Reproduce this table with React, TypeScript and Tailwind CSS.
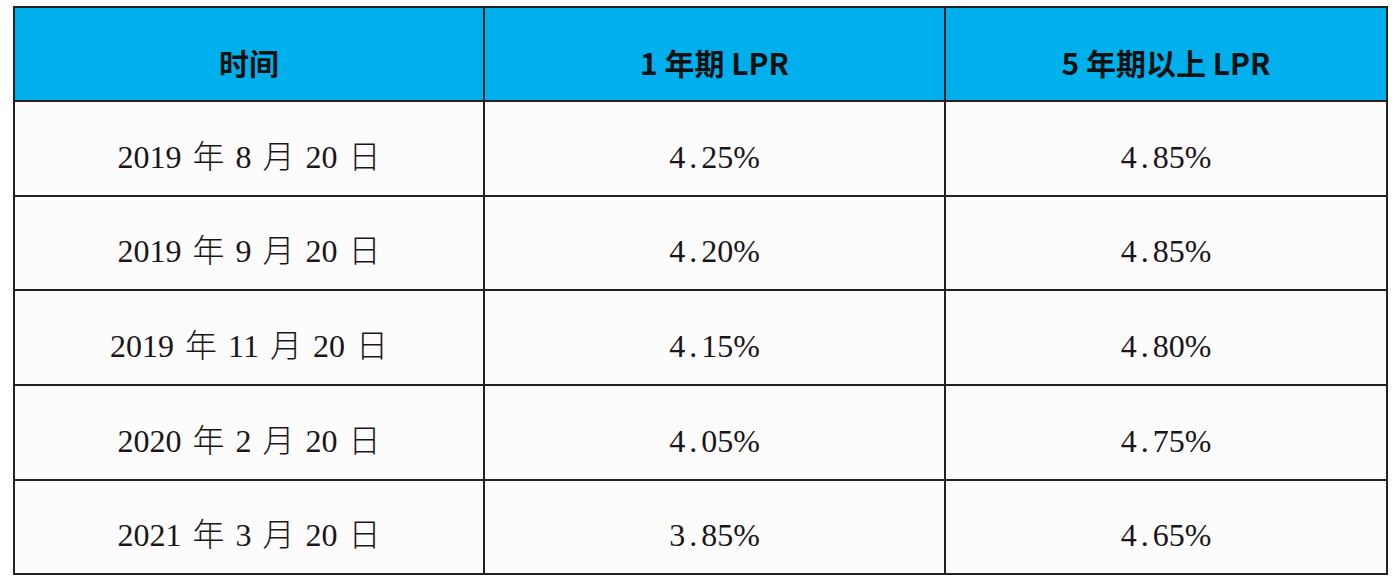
const headers = ['时间', '1 年期 LPR', '5 年期以上 LPR'];

const rows = [
    { date: ['2019', '8', '20'], one: '4.25%', five: '4.85%' },
    { date: ['2019', '9', '20'], one: '4.20%', five: '4.85%' },
    { date: ['2019', '11', '20'], one: '4.15%', five: '4.80%' },
    { date: ['2020', '2', '20'], one: '4.05%', five: '4.75%' },
    { date: ['2021', '3', '20'], one: '3.85%', five: '4.65%' },
];

const bodyFont = { fontFamily: '"Liberation Serif", "Noto Sans CJK SC", serif' };

const Rate = ({ value }: { value: string }) => {
    const [a, b] = value.split('.');
    return (
        <span className="text-[32px] text-[#1c1518]" style={bodyFont}>
            {a}
            <span className="mx-[4px]">.</span>
            {b}
        </span>
    );
};

const DateText = ({ parts }: { parts: string[] }) => (
    <span className="text-[32px] text-[#1c1518] [word-spacing:3px]" style={bodyFont}>
        {parts[0]} <span className="font-light">年</span> {parts[1]} <span className="font-light">月</span> {parts[2]} <span className="font-light">日</span>
    </span>
);

export default function App() {
    return (
        <div className="min-h-screen bg-white pl-[13px] pt-[6px]">
            <div className="grid w-[1375px] grid-cols-[468px_459px_440px] grid-rows-[92px_93px_92px_93px_93px_92px] gap-[2px] bg-[#222] p-[2px]">
                {headers.map((h) => (
                    <div
                        key={h}
                        className="flex items-center justify-center bg-[#00b0ec] pt-[16px] text-[30px] font-bold text-[#111]"
                        style={{ fontFamily: '"Noto Sans CJK SC", "Liberation Sans", sans-serif' }}
                    >
                        {h}
                    </div>
                ))}
                {rows.map((r, i) => (
                    <div key={i} className="contents">
                        <div className="flex items-center justify-center bg-[#fdfcfd] pt-[16px]">
                            <DateText parts={r.date} />
                        </div>
                        <div className="flex items-center justify-center bg-[#fdfcfd] pt-[16px]">
                            <Rate value={r.one} />
                        </div>
                        <div className="flex items-center justify-center bg-[#fdfcfd] pt-[16px]">
                            <Rate value={r.five} />
                        </div>
                    </div>
                ))}
            </div>
        </div>
    );
}
